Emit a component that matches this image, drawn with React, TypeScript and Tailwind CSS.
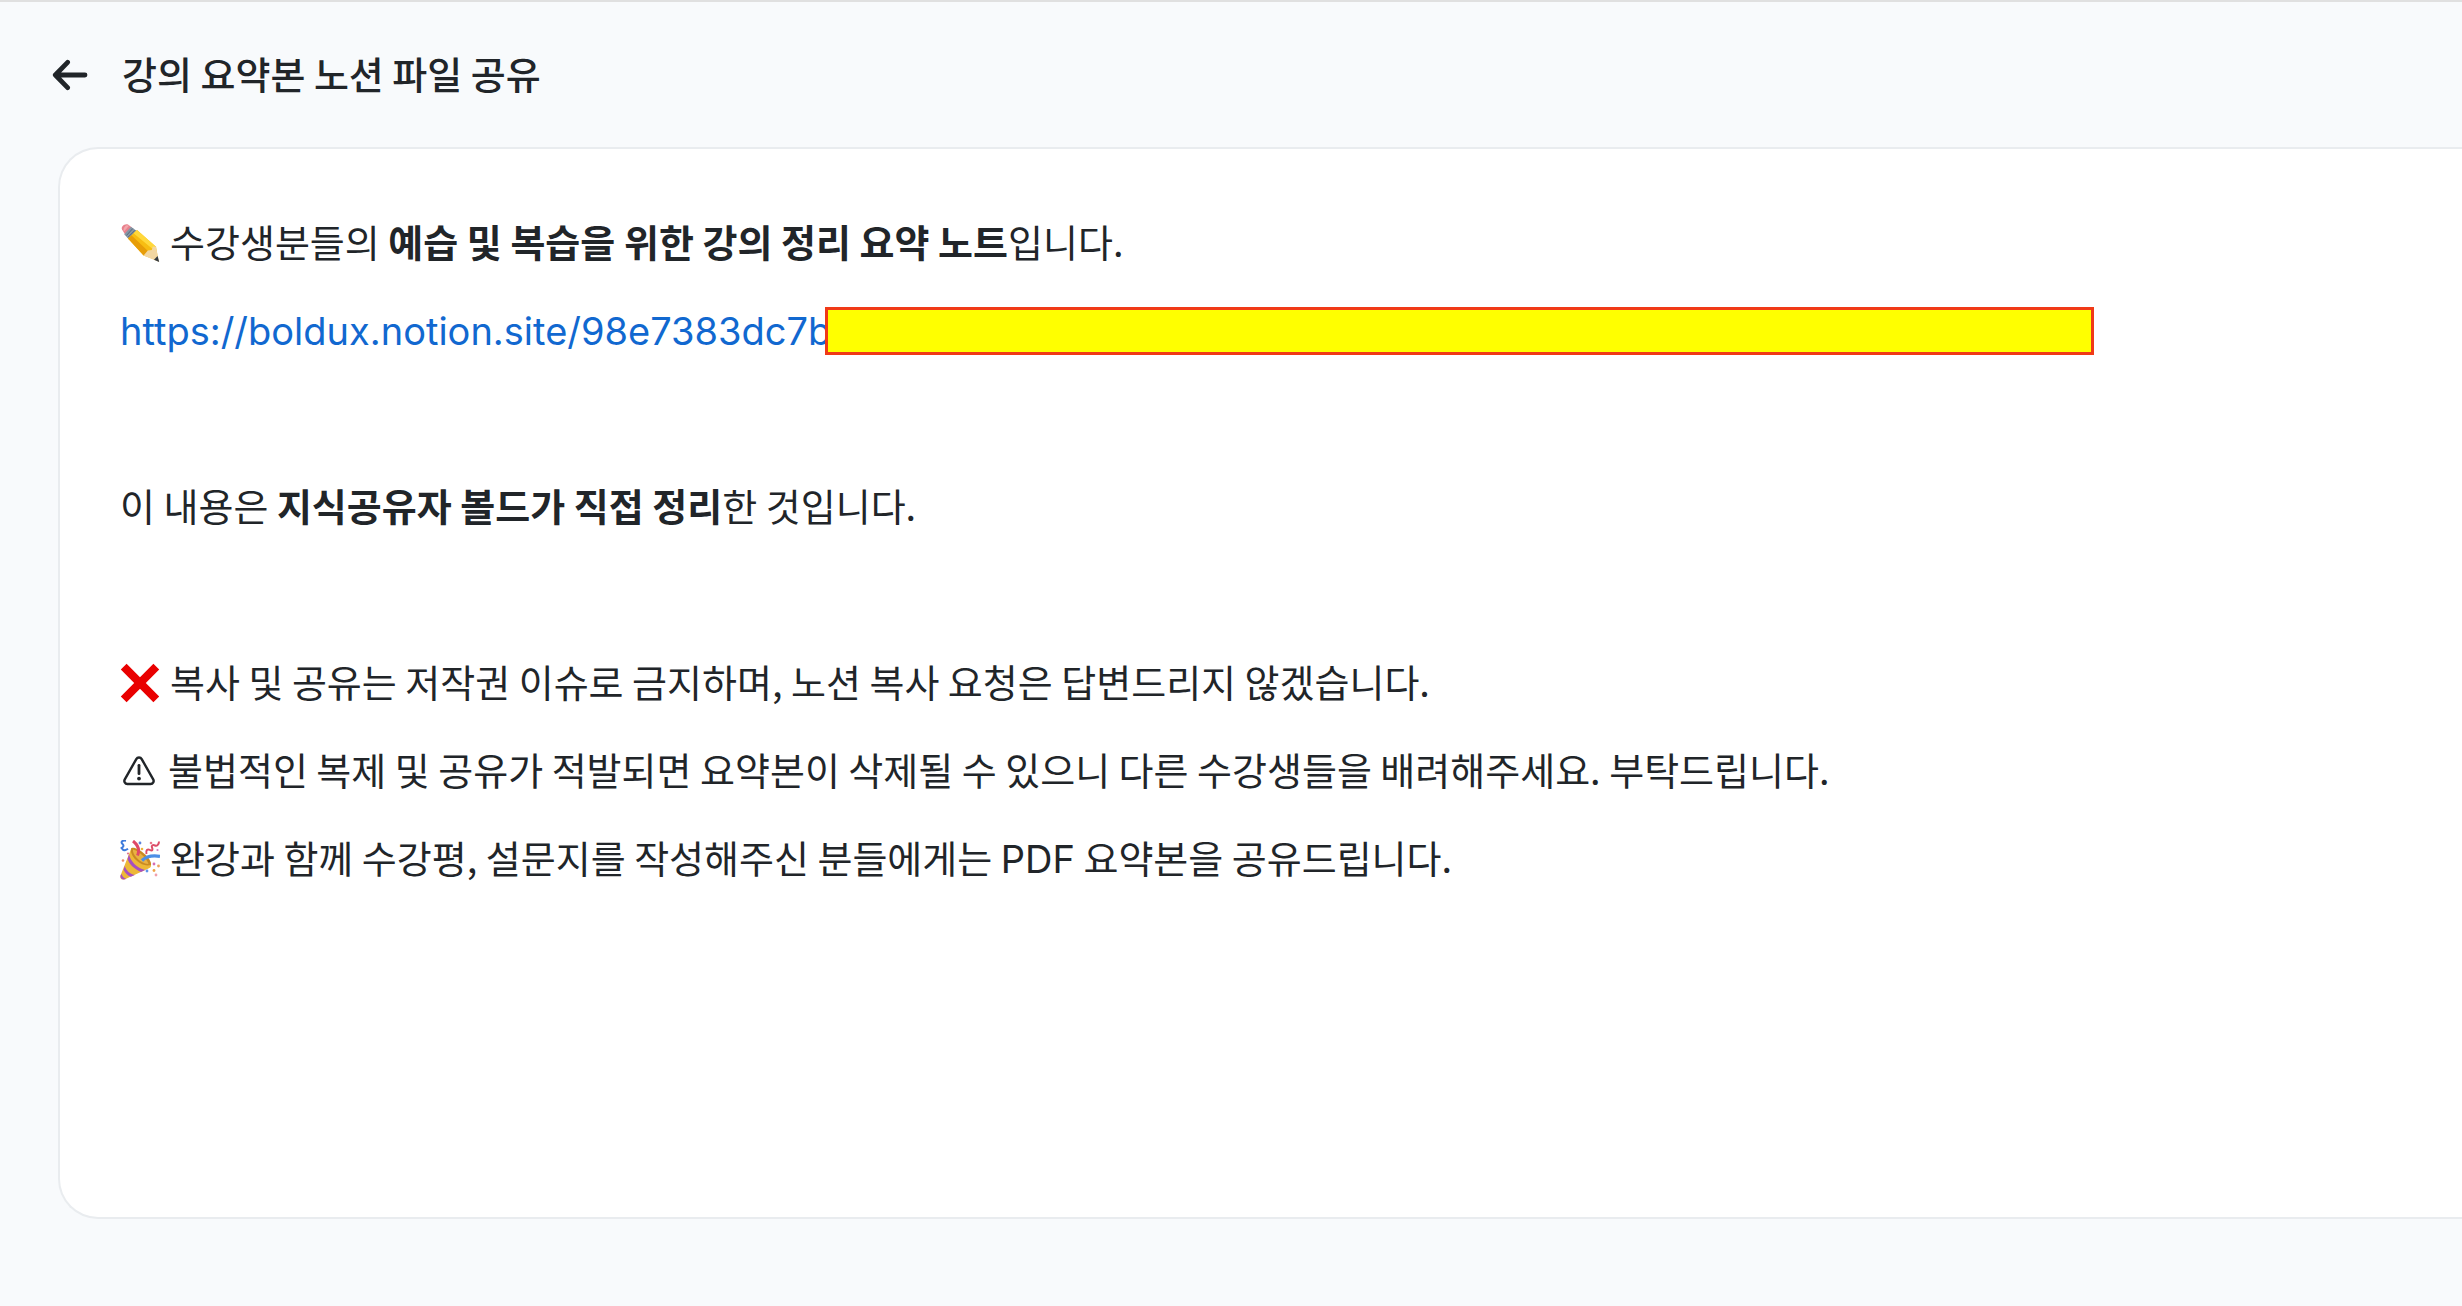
import React from 'react';

const ArrowLeftIcon = () => (
  <svg viewBox="0 0 36 32" className="w-9 h-8" fill="none" stroke="currentColor" strokeWidth="4.8" strokeLinecap="round" strokeLinejoin="round" aria-hidden="true">
    <path d="M33 16H3.500M15.600 3.300L3.300 16l12.300 12.700" />
  </svg>
);

const PencilIcon = () => (
  <svg viewBox="0 0 40 40" className="size-10 shrink-0" aria-hidden="true">
    <path d="M2 6.5C.6 3.6 4.6.2 8 1.5l4 3L5.4 12z" fill="#e8808c" />
    <path d="M5 3.5C6 2 8 2 9 2.8L4 8.5C3 7 3.6 5 5 3.5z" fill="#f3a6ac" />
    <path d="M4.200 11.200L11 3.800l6.500 4.600-8.500 8z" fill="#8696a5" />
    <path d="M6.3 12.6L12.800 5.500M8 14.3l7-7" stroke="#55697c" strokeWidth="1" />
    <path d="M8 15.600l9-8.600 19 16.800L38.400 38l-14.800-5.600z" fill="#f7bd12" />
    <path d="M8 15.600l3.400-3.400L29 29l-5.400 3.400z" fill="#e79d08" />
    <path d="M13.500 10.300L17 7l19 16.800-4 1.800z" fill="#ffd83b" />
    <path d="M23.600 32.400l4.200-4.800 4-.6 1-3.600 3.200.4L39 39z" fill="#f2d6a1" />
    <path d="M34 36.800l3.600-3.700L39.200 39z" fill="#333a40" />
  </svg>
);

const CrossIcon = () => (
  <svg viewBox="0 0 40 40" className="size-10 shrink-0" aria-hidden="true">
    <path d="M6.6.8L20 14.2 33.4.8l5.8 5.8L25.8 20l13.4 13.4-5.8 5.8L20 25.8 6.6 39.2.8 33.4 14.2 20 .8 6.6z" fill="#e90000" />
  </svg>
);

const WarningIcon = () => (
  <svg viewBox="0 0 38 40" className="w-[38px] h-10 shrink-0" fill="none" aria-hidden="true">
    <path d="M16.3 8.1c1.2-2.2 4.2-2.2 5.4 0l11.5 20.2c1.2 2.1-.2 4.7-2.6 4.7H7.4c-2.4 0-3.8-2.6-2.6-4.7z" stroke="currentColor" strokeWidth="2.4" />
    <path d="M19 14.3v8.4" stroke="currentColor" strokeWidth="2.8" strokeLinecap="round" />
    <circle cx="19" cy="27.6" r="1.9" fill="currentColor" />
  </svg>
);

const PartyIcon = () => (
  <svg viewBox="0 0 40 40" className="size-10 shrink-0" fill="none" aria-hidden="true">
    <path d="M11.5 8C15 7 30 17 31 25c.3 2-1 3-2.5 3.4L5 39.3c-2.8 1-5.3-.7-4.6-3.6z" fill="#edb837" />
    <path d="M11.5 8C8 13 19 28 31 25 32 18 17 6 11.5 8z" fill="#c98a22" />
    <path d="M13 9.5c-1 4 6 14 15.5 14.5-2-6-10-13.5-15.5-14.5z" fill="#e9b242" />
    <path d="M9 14c1 7 8 14 16 16l-4 1.9C14 29 9 24 7.600 19zM4.800 26c1 4 5 8 10 9l-4 1.700c-3-1-6-4-7.200-7zM1.600 34c.5 2 2 4 4.600 5l-2.600.5C1 39 0 37.500.7 35z" fill="#a64fc0" />
    <path d="M17.5 15.5C20 10 18 5 13 1" stroke="#df4868" strokeWidth="3" />
    <path d="M22 20.5c4-4 10-5.500 18-4.200" stroke="#4d8fe6" strokeWidth="3.2" />
    <path d="M6 .8C2 0 .5 2 2.500 4S3 7 1.500 8c2 3.500 5 2 6.500.8" stroke="#3e7bdc" strokeWidth="2" />
    <path d="M26.5 14c-1-4 1-5.500 3.500-4s3-.5 2-2.500 1-3 3-2S39 4 39 1.500" stroke="#dc4d69" strokeWidth="2" />
    <circle cx="20" cy="3" r="1.4" fill="#5c83dc" />
    <circle cx="31" cy="3" r="1.3" fill="#e8798d" />
    <circle cx="22" cy="9" r="1.3" fill="#efb43c" />
    <circle cx="37.5" cy="10" r="1.1" fill="#d577bd" />
    <circle cx="8" cy="13.5" r="1.1" fill="#e27390" />
    <circle cx="3" cy="20.5" r="1.3" fill="#e58b66" />
    <circle cx="34" cy="24" r="1.4" fill="#d76db4" />
    <circle cx="38.5" cy="26" r="1.4" fill="#eda15c" />
    <circle cx="27" cy="31" r="1.4" fill="#5d94ea" />
    <circle cx="34" cy="30.5" r="1.4" fill="#f0a448" />
    <circle cx="36" cy="35" r="1.4" fill="#f0a0ac" />
  </svg>
);

interface NoteLineProps {
  icon?: React.ReactNode;
  children?: React.ReactNode;
}

const NoteLine: React.FC<NoteLineProps> = ({ icon, children }) => (
  <div className="flex items-center gap-2.5 min-h-[60px]">
    {icon}
    <p className="leading-[56px] pb-1">{children}</p>
  </div>
);

const App: React.FC = () => {
  return (
    <div className="min-h-screen flex flex-col bg-[#f8fafc] border-t-2 border-[#e0e0e0] text-[#212529] font-['Noto_Sans_CJK_KR',sans-serif]">
      <header className="flex items-center gap-[34px] pl-[52px] py-12">
        <button type="button" aria-label="뒤로 가기">
          <ArrowLeftIcon />
        </button>
        <h1 className="text-[38px] leading-[45px] pb-1 font-medium">강의 요약본 노션 파일 공유</h1>
      </header>

      <main className="flex-1 flex flex-col gap-7 ml-[58px] mb-[87px] pl-[60px] pt-16 bg-white border-2 border-r-0 border-[#e9ecef] rounded-l-[40px] text-[38px]">
        <NoteLine icon={<PencilIcon />}>
          수강생분들의 <strong className="font-bold">예습 및 복습을 위한 강의 정리 요약 노트</strong>입니다.
        </NoteLine>
        <div className="flex items-center h-[60px]">
          <a href="https://boldux.notion.site/98e7383dc7b" className="font-['Inter',sans-serif] leading-[60px] text-[#1168d0]">
            https://boldux.notion.site/98e7383dc7b
          </a>
          <span className="relative -ml-1.5 w-[1269px] h-12 bg-[#ffff00] border-3 border-[#f03a17]"></span>
        </div>
        <NoteLine />
        <NoteLine>
          이 내용은 <strong className="font-bold">지식공유자 볼드가 직접 정리</strong>한 것입니다.
        </NoteLine>
        <NoteLine />
        <NoteLine icon={<CrossIcon />}>
          복사 및 공유는 저작권 이슈로 금지하며, 노션 복사 요청은 답변드리지 않겠습니다.
        </NoteLine>
        <NoteLine icon={<WarningIcon />}>
          불법적인 복제 및 공유가 적발되면 요약본이 삭제될 수 있으니 다른 수강생들을 배려해주세요. 부탁드립니다.
        </NoteLine>
        <NoteLine icon={<PartyIcon />}>
          완강과 함께 수강평, 설문지를 작성해주신 분들에게는 <span className="font-['Inter',sans-serif]">PDF</span> 요약본을 공유드립니다.
        </NoteLine>
      </main>
    </div>
  );
};

export default App;
